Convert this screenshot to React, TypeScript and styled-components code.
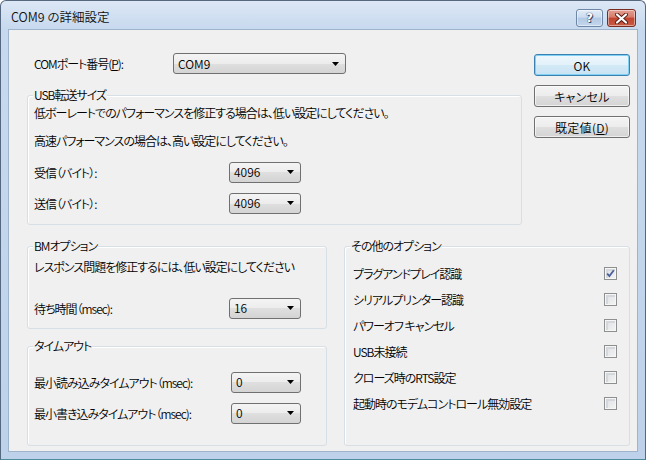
import React from 'react';
import styled, { createGlobalStyle } from 'styled-components';

const FONT = `"Noto Sans CJK JP", "Noto Sans", sans-serif`;

const Global = createGlobalStyle`
  html, body { margin: 0; padding: 0; background: #ffffff; }
  body { font-family: ${FONT}; }
`;

const Window = styled.div`
  width: 646px;
  height: 460px;
  box-sizing: border-box;
  border: 1px solid #55687f;
  border-bottom-color: #4d8c9c;
  border-radius: 6px 6px 0 0;
  background: linear-gradient(#dce7f5 0px, #c7d9ee 28px, #bdd2ea 100%);
  display: flex;
  flex-direction: column;
  font-family: ${FONT};
  font-size: 12px;
  font-weight: 350;
  font-feature-settings: "palt";
  letter-spacing: -1px;
  color: #000;
  overflow: hidden;
`;

const TitleBar = styled.div`
  height: 28px;
  flex: none;
  display: flex;
  align-items: flex-start;
  justify-content: space-between;
  padding: 0 9px 0 10px;
`;

const TitleText = styled.div`
  font-size: 12.5px;
  line-height: 16px;
  margin-top: 8px;
  letter-spacing: 0;
  color: #101010;
`;

const CaptionButtons = styled.div`
  display: flex;
  gap: 4px;
  margin-top: 8px;
`;

const CaptionButton = styled.div<{ $kind: 'help' | 'close' }>`
  width: ${p => (p.$kind === 'close' ? 29 : 27)}px;
  height: 18px;
  box-sizing: border-box;
  border-radius: 3px;
  display: flex;
  align-items: center;
  justify-content: center;
  border: 1px solid ${p => (p.$kind === 'close' ? '#7a2c22' : '#6f87a6')};
  background: ${p =>
    p.$kind === 'close'
      ? 'linear-gradient(#e3a093 0%, #d77b6a 45%, #c2442f 50%, #c75a43 100%)'
      : 'linear-gradient(#e2ecf7 0%, #ccdcef 45%, #b3c9e3 50%, #c3d6ec 100%)'};
  box-shadow: inset 0 0 0 1px rgba(255, 255, 255, 0.45);
  color: #fff;
  font-family: "DejaVu Sans", sans-serif;
  font-weight: bold;
  font-size: 12px;
  letter-spacing: 0;
  line-height: 1;
  text-shadow: 0 0 1px #3a4c66, 0 0 1px #3a4c66, 1px 1px 0 #3a4c66;
`;

const Client = styled.div`
  flex: 1;
  margin: 0 7px 7px 7px;
  background: #f0f0f0;
  border: 1px solid #9fb3cb;
  padding: 23px 7px 0 18px;
  display: flex;
  flex-direction: column;
`;

const TopArea = styled.div`
  display: flex;
  align-items: flex-start;
`;

const LeftTop = styled.div`
  width: 495px;
  display: flex;
  flex-direction: column;
`;

const ComRow = styled.div`
  height: 21px;
  display: flex;
  align-items: center;
`;

const ComLabel = styled.div`
  width: 146px;
  box-sizing: border-box;
  padding-left: 7px;
  white-space: nowrap;
`;

const Combo = styled.div<{ $w: number }>`
  width: ${p => p.$w}px;
  height: 21px;
  flex: none;
  box-sizing: border-box;
  border: 1px solid #707070;
  border-radius: 3px;
  background: linear-gradient(#f4f4f4 0%, #ececec 50%, #dfdfdf 50%, #d4d4d4 100%);
  display: flex;
  align-items: center;
  justify-content: space-between;
  padding: 0 6px 0 4px;
  letter-spacing: 0;
  line-height: 1;
`;

const Arrow = () => (
  <svg width="7" height="4" viewBox="0 0 7 4">
    <path d="M0 0 H7 L3.5 4 Z" fill="#000" />
  </svg>
);

const Group = styled.fieldset<{ $mt?: number; $pb?: number }>`
  margin: ${p => p.$mt ?? 0}px 0 0 0;
  min-width: 0;
  border: 1px solid #d5dfe5;
  border-radius: 3px;
  box-shadow: inset 1px 1px 0 #ffffff;
  padding: 0 12px ${p => p.$pb ?? 0}px 6px;
  box-sizing: border-box;
`;

const Legend = styled.legend`
  padding: 0 1px;
  margin-left: -1px;
  line-height: 16px;
  background: #f0f0f0;
  white-space: nowrap;
`;

const GroupBody = styled.div<{ $inset?: number; $mt?: number }>`
  display: flex;
  flex-direction: column;
  padding-left: ${p => p.$inset ?? 0}px;
  margin-top: ${p => p.$mt ?? 0}px;
`;

const Note = styled.div<{ $mt: number }>`
  margin-top: ${p => p.$mt}px;
  line-height: 18px;
  white-space: nowrap;
`;

const FieldRow = styled.div<{ $mt: number }>`
  margin-top: ${p => p.$mt}px;
  height: 22px;
  display: flex;
  align-items: center;
`;

const FieldLabel = styled.div<{ $w: number }>`
  width: ${p => p.$w}px;
  flex: none;
  white-space: nowrap;
`;

const ButtonColumn = styled.div`
  width: 96px;
  margin-left: 12px;
  margin-top: 1px;
  display: flex;
  flex-direction: column;
  gap: 9px;
`;

const DialogButton = styled.button<{ $default?: boolean }>`
  height: 22px;
  box-sizing: border-box;
  padding: 0;
  font-family: ${FONT};
  font-size: 12px;
  font-weight: 350;
  font-feature-settings: "palt";
  letter-spacing: 0.3px;
  color: #000;
  border-radius: 3px;
  border: 1px solid ${p => (p.$default ? '#3c7fb1' : '#707070')};
  background: ${p =>
    p.$default
      ? 'linear-gradient(#eef7fc 0%, #e3f1fa 50%, #d3e9f6 50%, #c9e3f3 100%)'
      : 'linear-gradient(#f4f4f4 0%, #ececec 50%, #dfdfdf 50%, #d4d4d4 100%)'};
  box-shadow: ${p => (p.$default ? 'inset 0 0 0 1px #7fd2f3' : 'inset 0 0 0 1px rgba(255,255,255,0.6)')};
`;

const BottomArea = styled.div`
  margin-top: 13px;
  display: grid;
  grid-template-columns: 300px 286px;
  column-gap: 17px;
  align-items: stretch;
`;

const LeftBottom = styled.div`
  display: flex;
  flex-direction: column;
`;

const OptionRow = styled.div`
  height: 26px;
  display: flex;
  align-items: center;
  justify-content: space-between;
`;

const OptionText = styled.span`
  white-space: pre;
`;

const Box = styled.div`
  width: 13px;
  height: 13px;
  box-sizing: border-box;
  border: 1px solid #8e8f8f;
  background: linear-gradient(135deg, #dcdee2 0%, #f4f4f4 100%);
  box-shadow: inset 0 0 0 1px #f6f6f6, inset 1px 1px 0 2px #d4d7dc;
  display: flex;
  align-items: center;
  justify-content: center;
`;

const Check = () => (
  <svg width="9" height="9" viewBox="0 0 9 9">
    <path d="M1.2 4.6 L3.4 7 L7.8 1.2" fill="none" stroke="#4b5f9b" strokeWidth="1.8" />
  </svg>
);

const options: { label: string; checked: boolean }[] = [
  { label: 'プラグアンドプレイ認識', checked: true },
  { label: 'シリアルプリンター認識', checked: false },
  { label: 'パワーオフ キャンセル', checked: false },
  { label: 'USB未接続', checked: false },
  { label: 'クローズ時のRTS設定', checked: false },
  { label: '起動時のモデムコントロール無効設定', checked: false },
];

export default function App() {
  return (
    <>
      <Global />
      <Window>
        <TitleBar>
          <TitleText>COM9 の詳細設定</TitleText>
          <CaptionButtons>
            <CaptionButton $kind="help">?</CaptionButton>
            <CaptionButton $kind="close">
              <svg width="13" height="11" viewBox="0 0 13 11">
                <path d="M2 1.5 L11 9.5 M11 1.5 L2 9.5" stroke="#5a1a12" strokeWidth="4" strokeLinecap="round" />
                <path d="M2 1.5 L11 9.5 M11 1.5 L2 9.5" stroke="#ffffff" strokeWidth="2.2" strokeLinecap="round" />
              </svg>
            </CaptionButton>
          </CaptionButtons>
        </TitleBar>
        <Client>
          <TopArea>
            <LeftTop>
              <ComRow>
                <ComLabel>
                  COMポート番号(<u>P</u>):
                </ComLabel>
                <Combo $w={173}>
                  COM9
                  <Arrow />
                </Combo>
              </ComRow>
              <Group $mt={13} $pb={10}>
                <Legend>USB転送サイズ</Legend>
                <GroupBody>
                  <Note $mt={1}>低ボーレートでのパフォーマンスを修正する場合は、低い設定にしてください。</Note>
                  <Note $mt={10}>高速パフォーマンスの場合は、高い設定にしてください。</Note>
                  <FieldRow $mt={11}>
                    <FieldLabel $w={195}>受信（バイト）:</FieldLabel>
                    <Combo $w={72}>
                      4096
                      <Arrow />
                    </Combo>
                  </FieldRow>
                  <FieldRow $mt={9}>
                    <FieldLabel $w={195}>送信（バイト）:</FieldLabel>
                    <Combo $w={72}>
                      4096
                      <Arrow />
                    </Combo>
                  </FieldRow>
                </GroupBody>
              </Group>
            </LeftTop>
            <ButtonColumn>
              <DialogButton $default>OK</DialogButton>
              <DialogButton>キャンセル</DialogButton>
              <DialogButton>
                既定値(<u>D</u>)
              </DialogButton>
            </ButtonColumn>
          </TopArea>
          <BottomArea>
            <LeftBottom>
              <Group $pb={9}>
                <Legend>BMオプション</Legend>
                <GroupBody>
                  <Note $mt={4}>レスポンス問題を修正するには、低い設定にしてください</Note>
                  <FieldRow $mt={21}>
                    <FieldLabel $w={195}>待ち時間（msec):</FieldLabel>
                    <Combo $w={72}>
                      16
                      <Arrow />
                    </Combo>
                  </FieldRow>
                </GroupBody>
              </Group>
              <Group $mt={9} $pb={21}>
                <Legend>タイムアウト</Legend>
                <GroupBody>
                  <FieldRow $mt={17}>
                    <FieldLabel $w={197}>最小読み込みタイムアウト（msec):</FieldLabel>
                    <Combo $w={70}>
                      0
                      <Arrow />
                    </Combo>
                  </FieldRow>
                  <FieldRow $mt={9}>
                    <FieldLabel $w={197}>最小書き込みタイムアウト（msec):</FieldLabel>
                    <Combo $w={70}>
                      0
                      <Arrow />
                    </Combo>
                  </FieldRow>
                </GroupBody>
              </Group>
            </LeftBottom>
            <Group>
              <Legend>その他のオプション</Legend>
              <GroupBody $inset={2} $mt={6}>
                {options.map(o => (
                  <OptionRow key={o.label}>
                    <OptionText>{o.label}</OptionText>
                    <Box>{o.checked && <Check />}</Box>
                  </OptionRow>
                ))}
              </GroupBody>
            </Group>
          </BottomArea>
        </Client>
      </Window>
    </>
  );
}
